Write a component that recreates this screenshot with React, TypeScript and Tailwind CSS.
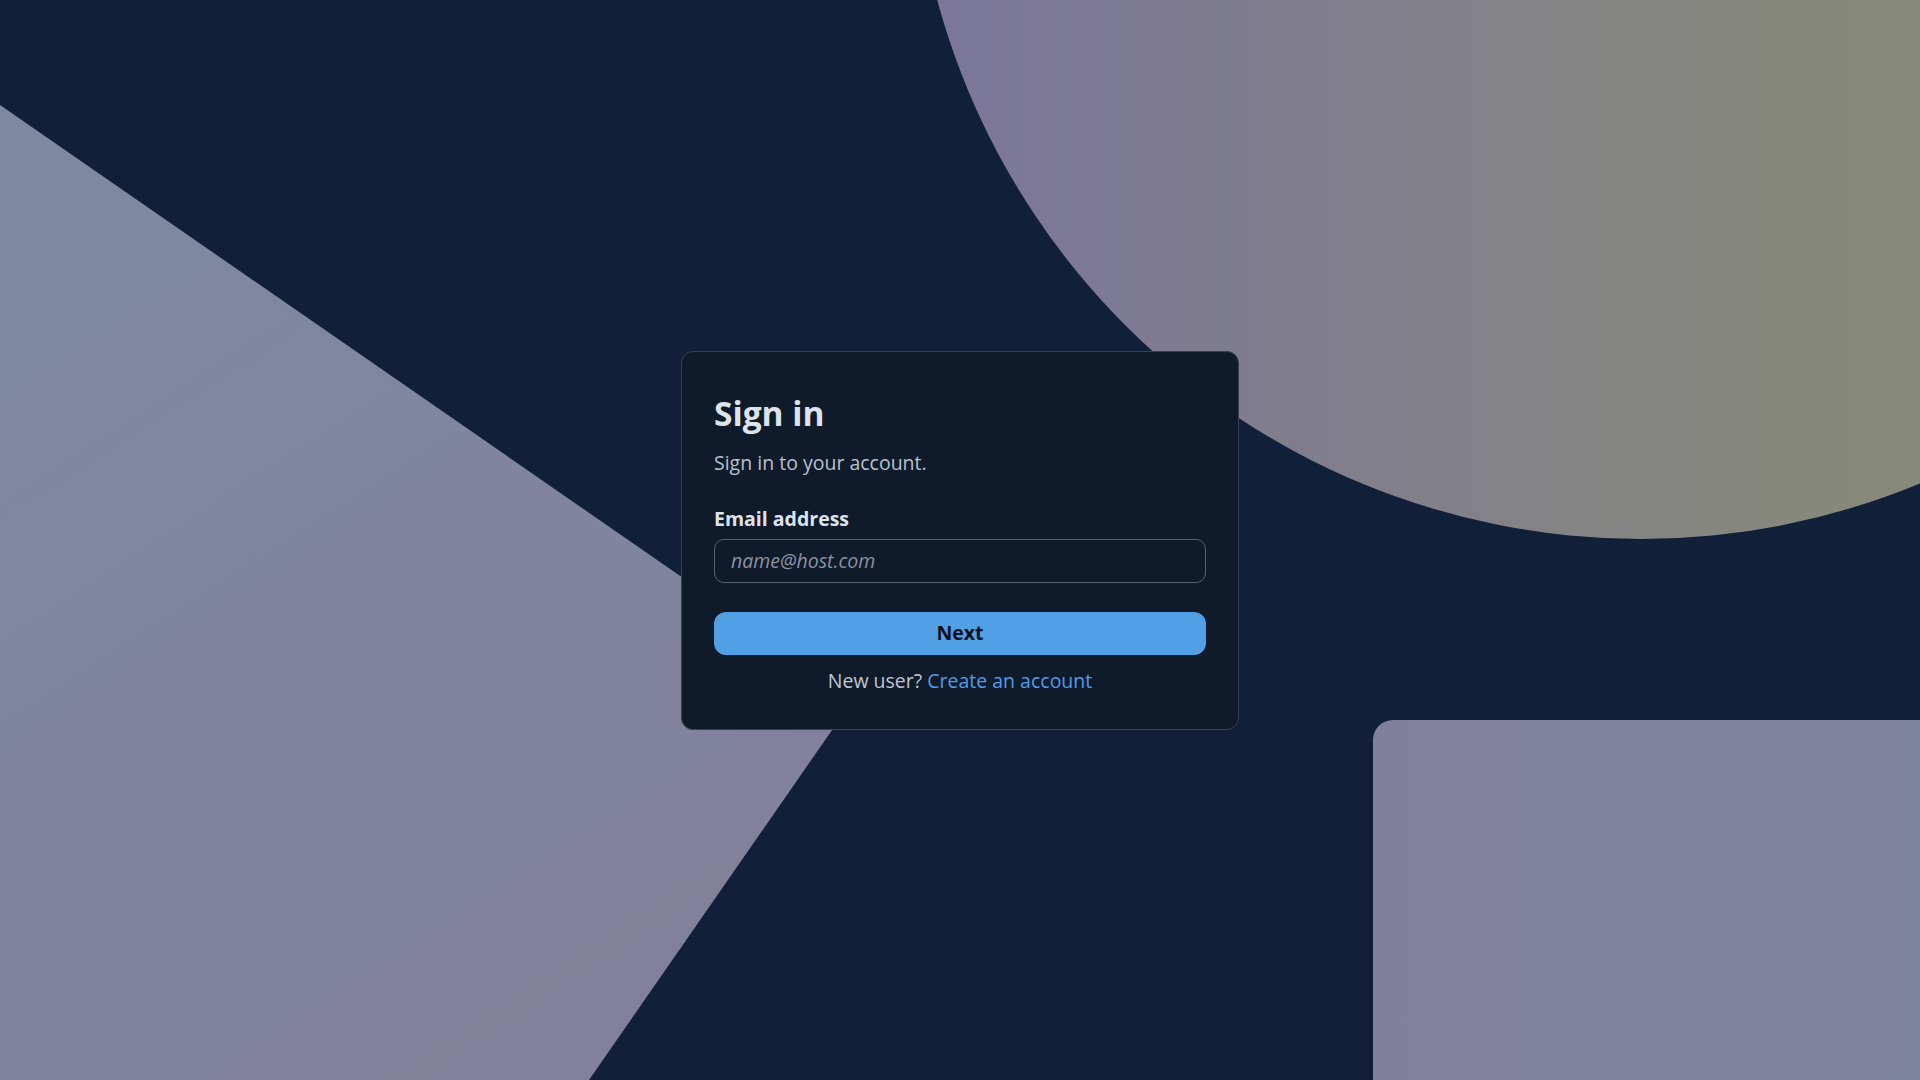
const Backdrop = () => (
  <svg
    className="absolute inset-0 h-full w-full"
    viewBox="0 0 1920 1080"
    preserveAspectRatio="none"
  >
    <defs>
      <linearGradient id="wedge" gradientUnits="userSpaceOnUse" x1="0" y1="120" x2="620" y2="1080">
        <stop offset="0" stopColor="#7e8aa1" />
        <stop offset="1" stopColor="#82809a" />
      </linearGradient>
      <linearGradient id="orb" gradientUnits="userSpaceOnUse" x1="912" y1="0" x2="2370" y2="0">
        <stop offset="0" stopColor="#7b769b" />
        <stop offset="1" stopColor="#8d9368" />
      </linearGradient>
      <linearGradient id="block" gradientUnits="userSpaceOnUse" x1="1373" y1="0" x2="1920" y2="0">
        <stop offset="0" stopColor="#807f99" />
        <stop offset="1" stopColor="#7c8299" />
      </linearGradient>
    </defs>
    <polygon points="0,105 855,697 589,1080 0,1080" fill="url(#wedge)" />
    <circle cx="1641" cy="-190" r="729" fill="url(#orb)" />
    <rect x="1373" y="720" width="640" height="420" rx="20" fill="url(#block)" />
  </svg>
);

const SignInCard = () => {
  return (
    <div className="relative w-[558px] rounded-[12px] border border-[#3a414f] bg-[#0f1a2b] px-8 pb-[34px] pt-[41px] font-['Open_Sans',sans-serif]">
      <h1 className="text-[33.5px] font-bold leading-[40px] text-[#dde3ea]">
        Sign in
      </h1>
      <p className="mt-4 text-[19.5px] leading-[28px] text-[#b9c1cc]">
        Sign in to your account.
      </p>
      <label className="mt-7 block text-[19.5px] font-bold leading-[28px] text-[#dee3e9]">
        Email address
      </label>
      <input
        type="email"
        placeholder="name@host.com"
        className="mt-[6px] h-[44px] w-full rounded-[10px] border border-[#5a6171] bg-transparent px-4 text-[19.5px] text-[#dde3ea] outline-none placeholder:italic placeholder:text-[#8a93a2]"
      />
      <button className="mt-[29px] h-[43px] w-full rounded-[12px] bg-[#519fe4] text-[19.5px] font-bold text-[#0a1020]">
        Next
      </button>
      <p className="mt-3 text-center text-[19.5px] leading-[28px] text-[#c0c7d1]">
        New user?{" "}
        <a href="#" className="text-[#4f9de5]">
          Create an account
        </a>
      </p>
    </div>
  );
};

const App = () => {
  return (
    <div className="relative flex h-[1080px] w-full items-center justify-center overflow-hidden bg-[#111f38]">
      <Backdrop />
      <SignInCard />
    </div>
  );
};

export default App;
